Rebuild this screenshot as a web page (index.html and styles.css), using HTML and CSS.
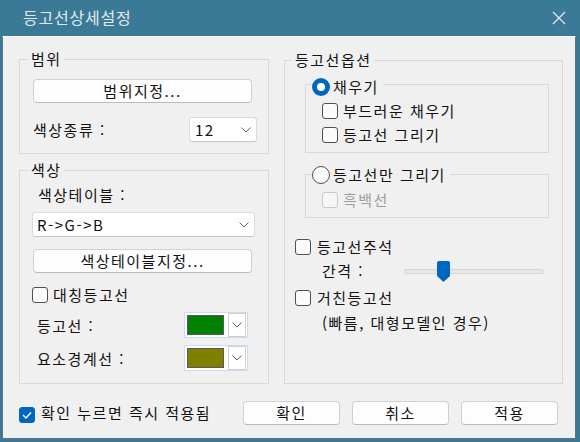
FILE: index.html
```html
<!DOCTYPE html>
<html lang="ko">
<head>
<meta charset="utf-8">
<title>등고선상세설정</title>
<link rel="stylesheet" href="styles.css">
</head>
<body>
<div class="window">
  <div class="titlebar">
    <span class="title">등고선상세설정</span>
    <svg class="close" width="14" height="14" viewBox="0 0 14 14"><path d="M1 1 L13 13 M13 1 L1 13" stroke="#dfe8ed" stroke-width="1.3" fill="none"/></svg>
  </div>
  <div class="dialog">
    <div class="columns">
      <div class="col-left">
        <div class="group range">
          <div class="legend legend-left">범위</div>
          <div class="btn btn-wide range-btn">범위지정...</div>
          <div class="row kind-row">
            <span>색상종류 :</span>
            <div class="combo combo-num"><span>12</span><svg class="chev" width="10" height="6" viewBox="0 0 10 6"><path d="M0.5 0.5 L5 5 L9.5 0.5" stroke="#606060" fill="none"/></svg></div>
          </div>
        </div>
        <div class="group color">
          <div class="legend legend-left2">색상</div>
          <div class="tbl-label">색상테이블 :</div>
          <div class="combo combo-tbl"><span>R-&gt;G-&gt;B</span><svg class="chev" width="10" height="6" viewBox="0 0 10 6"><path d="M0.5 0.5 L5 5 L9.5 0.5" stroke="#606060" fill="none"/></svg></div>
          <div class="btn btn-wide tbl-btn">색상테이블지정...</div>
          <div class="row check-row sym-row"><span class="cb"></span><span>대칭등고선</span></div>
          <div class="row pick-row">
            <span>등고선 :</span>
            <div class="picker"><span class="swatch green"></span><span class="pick-arrow"><svg width="10" height="6" viewBox="0 0 10 6"><path d="M0.5 0.5 L5 5 L9.5 0.5" stroke="#606060" fill="none"/></svg></span></div>
          </div>
          <div class="row pick-row">
            <span>요소경계선 :</span>
            <div class="picker"><span class="swatch olive"></span><span class="pick-arrow"><svg width="10" height="6" viewBox="0 0 10 6"><path d="M0.5 0.5 L5 5 L9.5 0.5" stroke="#606060" fill="none"/></svg></span></div>
          </div>
        </div>
      </div>
      <div class="col-right">
        <div class="group options">
          <div class="legend legend-opt">등고선옵션</div>
          <div class="group sub sub1">
            <div class="legend legend-radio"><span class="rb on"></span><span>채우기</span></div>
            <div class="row check-row sub-check first"><span class="cb"></span><span>부드러운 채우기</span></div>
            <div class="row check-row sub-check"><span class="cb"></span><span>등고선 그리기</span></div>
          </div>
          <div class="group sub sub2">
            <div class="legend legend-radio legend-radio2"><span class="rb"></span><span>등고선만 그리기</span></div>
            <div class="row check-row sub-check bw"><span class="cb disabled"></span><span class="disabled-text">흑백선</span></div>
          </div>
          <div class="row check-row anno-row"><span class="cb"></span><span>등고선주석</span></div>
          <div class="row interval-row">
            <span class="interval-label">간격 :</span>
            <div class="slider">
              <div class="track"></div>
              <svg class="thumb" width="13" height="21" viewBox="0 0 13 21"><path d="M2 0 H11 Q13 0 13 2 V15 L6.5 21 L0 15 V2 Q0 0 2 0 Z" fill="#0067c0"/></svg>
            </div>
          </div>
          <div class="row check-row coarse-row"><span class="cb"></span><span>거친등고선</span></div>
          <div class="note">(빠름, 대형모델인 경우)</div>
        </div>
      </div>
    </div>
    <div class="footer">
      <span class="cb checked"><svg width="12" height="10" viewBox="0 0 12 10"><path d="M2 5 L5 8 L10 2.5" stroke="#fff" stroke-width="1.4" fill="none"/></svg></span>
      <span class="footer-label">확인 누르면 즉시 적용됨</span>
      <div class="buttons">
        <div class="btn btn-foot">확인</div>
        <div class="btn btn-foot">취소</div>
        <div class="btn btn-foot">적용</div>
      </div>
    </div>
  </div>
</div>
</body>
</html>
```
FILE: styles.css
```css
* { box-sizing: border-box; }
html, body { margin: 0; padding: 0; }
body {
  background: #3a7a96;
  font-family: "Noto Sans CJK KR", "Noto Sans", sans-serif;
  font-size: 15px;
  letter-spacing: 1.5px;
  color: #111;
  width: 580px;
  height: 442px;
  overflow: hidden;
}
.window { width: 580px; height: 442px; }
.titlebar {
  height: 36px;
  display: flex;
  align-items: center;
  padding: 0 14px 0 23px;
  color: #e3eaee;
  font-size: 16px;
  letter-spacing: 0.8px;
}
.title { line-height: 20px; margin-top: -2px; }
.close { margin-left: auto; }
.dialog {
  margin-left: 2px;
  width: 574px;
  height: 403px;
  background: #f0f0f0;
  border: 1px solid #5b7582;
  border-top: 1px solid #fafafa;
  padding: 22px 12px 0 16px;
}
.columns { display: flex; gap: 15px; }
.col-left { width: 250px; display: flex; flex-direction: column; }
.col-right { width: 279px; display: flex; flex-direction: column; padding-top: 1px; }

.group { border: 1px solid #d9d9d9; }
.legend {
  line-height: 20px;
  height: 20px;
  background: #f0f0f0;
  padding: 0 2px 0 3px;
  width: fit-content;
  margin-top: -11px;
  margin-left: 8px;
}
.legend-left { margin-left: -5px; }
.legend-left2 { margin-left: -4px; }
.row { display: flex; align-items: center; }

.btn {
  height: 24px;
  background: #fdfdfd;
  border: 1px solid #d0d0d0;
  border-bottom-color: #bababa;
  border-radius: 4px;
  display: flex;
  align-items: center;
  justify-content: center;
  line-height: 20px;
}
.btn-wide { width: 219px; }

.combo {
  height: 25px;
  background: #fff;
  border: 1px solid #dadada;
  border-bottom-color: #c6c6c6;
  border-radius: 3px;
  display: flex;
  align-items: center;
  padding: 0 5px 0 5px;
  line-height: 20px;
}
.combo .chev { margin-left: auto; }

.range { padding: 0 11px 11px 13px; }
.range-btn { margin-top: 10px; }
.kind-row { margin-top: 14px; height: 25px; justify-content: space-between; }
.combo-num { width: 68px; }

.color { margin-top: 16px; padding: 0 0 12px 12px; }
.tbl-label { margin-top: 5px; margin-left: 6px; line-height: 20px; }
.combo-tbl { width: 223px; margin-top: 7px; padding-left: 4px; }
.tbl-btn { margin-top: 12px; margin-left: 1px; }

.check-row { height: 20px; gap: 5px; line-height: 20px; }
.sym-row { margin-top: 12px; }

.cb {
  width: 16px;
  height: 16px;
  border: 1px solid #505050;
  border-radius: 3px;
  background: #fbfbfb;
  flex: none;
}
.cb.disabled { border-color: #c8c8c8; background: #f6f6f6; }
.cb.checked {
  background: #0067c0;
  border-color: #0067c0;
  display: flex;
  align-items: center;
  justify-content: center;
}
.disabled-text { color: #9d9d9d; }

.pick-row { margin-top: 7px; height: 26px; justify-content: space-between; padding-left: 5px; padding-right: 20px; }
.picker {
  width: 64px;
  height: 26px;
  border: 1px solid #c6ddf2;
  background: #fff;
  display: flex;
  align-items: center;
  padding: 0 1px 0 2px;
}
.swatch { width: 37px; height: 20px; border: 1px solid #5a5a5a; }
.swatch.green { background: #008000; }
.swatch.olive { background: #808000; }
.pick-arrow {
  margin-left: auto;
  width: 18px;
  height: 24px;
  border: 1px solid #cfcfcf;
  background: #fff;
  display: flex;
  align-items: center;
  justify-content: center;
}

.options { flex: 1; }
.legend-opt { margin-left: 7px; }
.sub { margin-left: 20px; width: 244px; padding-bottom: 7px; }
.sub1 { margin-top: 14px; }
.sub2 { margin-top: 21px; }
.legend-radio {
  display: flex;
  align-items: center;
  gap: 3px;
  margin-top: -8px;
  margin-left: 6px;
  padding: 0 4px 0 0;
}
.legend-radio2 { margin-top: -10px; }
.rb {
  width: 18px;
  height: 18px;
  border-radius: 50%;
  border: 1px solid #505050;
  background: #fbfbfb;
  flex: none;
}
.rb.on {
  border: none;
  background: #0067c0;
  display: flex;
  align-items: center;
  justify-content: center;
}
.rb.on::after {
  content: "";
  width: 8px;
  height: 8px;
  border-radius: 50%;
  background: #fff;
}
.sub-check { margin-left: 16px; margin-top: 4px; }
.bw { margin-top: 5px; }

.anno-row { margin-top: 19px; margin-left: 10px; gap: 6px; }
.interval-row { margin-top: 3px; height: 22px; }
.interval-label { margin-left: 37px; line-height: 20px; }
.slider {
  position: relative;
  width: 140px;
  height: 22px;
  margin-left: auto;
  margin-right: 18px;
  display: flex;
  align-items: center;
}
.track {
  flex: 1;
  height: 5px;
  background: #e6e6e6;
  border: 1px solid #d6d6d6;
  border-radius: 2px;
}
.thumb { position: absolute; left: 33px; top: 1px; }
.coarse-row { margin-top: 6px; margin-left: 10px; gap: 6px; }
.note { margin-top: 5px; margin-left: 37px; line-height: 20px; }

.footer {
  margin-top: 17px;
  height: 24px;
  display: flex;
  align-items: center;
  padding-right: 5px;
}
.footer .cb { margin-top: 3px; margin-left: 0; }
.footer-label { margin-left: 6px; line-height: 20px; }
.buttons { margin-left: auto; display: flex; gap: 12px; }
.btn-foot { width: 97px; }
```
